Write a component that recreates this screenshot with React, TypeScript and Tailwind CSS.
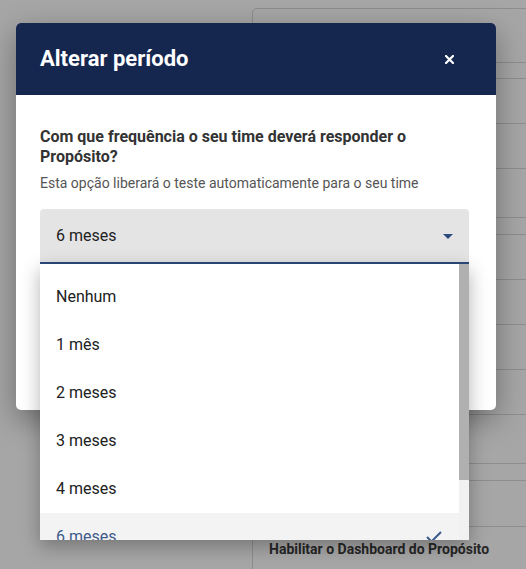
import React from "react";

const rows = [54, 16, 45, 45, 49, 17, 45, 45, 45, 45, 49, 17, 46];
const items = ["Nenhum", "1 mês", "2 meses", "3 meses", "4 meses"];

export default function App() {
  return (
    <div
      className="relative w-[526px] h-[569px] overflow-hidden bg-[#a6a6a6]"
      style={{ fontFamily: "Roboto, 'Noto Sans', sans-serif" }}
    >
      {/* background page */}
      <div className="pl-[252px] pt-[8px]">
        <div className="border-l border-t border-[#8d8d8d] rounded-tl-[5px] h-[600px]">
          {rows.map((h, i) => (
            <div key={i} className="border-b border-[#8d8d8d] box-border" style={{ height: h }} />
          ))}
          <div className="pl-[16px] pt-[12px] text-[14px] font-bold text-[#262626] leading-[20px]">
            Habilitar o Dashboard do Propósito
          </div>
        </div>
      </div>

      {/* dialog */}
      <div className="absolute left-[16px] top-[23px] w-[480px] h-[387px] bg-white rounded-[5px] overflow-hidden shadow-[0_10px_30px_rgba(0,0,0,0.35)]">
        <div className="h-[72px] bg-[#15264f] flex items-center justify-between pl-[24px] pr-[42px]">
          <h2 className="text-white text-[22px] font-bold leading-[26px]">Alterar período</h2>
          <svg width="9" height="9" viewBox="0 0 9 9">
            <path d="M1 1 L8 8 M8 1 L1 8" stroke="white" strokeWidth="2.2" strokeLinecap="square" />
          </svg>
        </div>
        <div className="px-[24px] pt-[32px]">
          <p className="text-[16px] font-bold text-[#333333] leading-[20px]">
            Com que frequência o seu time deverá responder o Propósito?
          </p>
          <p className="mt-[6px] text-[14px] text-[#555555] leading-[20px]">
            Esta opção liberará o teste automaticamente para o seu time
          </p>
          <div className="mt-[16px] w-[429px] h-[55px] pt-[1px] bg-[#e4e4e4] rounded-t-[4px] border-b-2 border-[#2c4a7e] flex items-center justify-between pl-[16px] pr-[16px] box-border">
            <span className="text-[16px] text-[#222222]">6 meses</span>
            <svg width="10" height="5" viewBox="0 0 10 5">
              <path d="M0 0 L10 0 L5 5 Z" fill="#2c4a7e" />
            </svg>
          </div>
        </div>
      </div>

      {/* dropdown menu */}
      <div className="absolute left-[40px] top-[264px] w-[429px] h-[276px] bg-white overflow-hidden shadow-[0_6px_18px_rgba(0,0,0,0.3)] flex">
        <div className="flex-1 pt-[9px]">
          {items.map((t) => (
            <div key={t} className="h-[48px] flex items-center pl-[16px] text-[16px] text-[#212121]">
              {t}
            </div>
          ))}
          <div className="h-[48px] flex items-center justify-between pl-[16px] pr-[16px] bg-[#f3f3f3] text-[16px] text-[#3f5b8c]">
            <span>6 meses</span>
            <svg width="18" height="14" viewBox="0 0 18 14">
              <path d="M2 7 L6.5 11.5 L16 2" stroke="#3b5a8c" strokeWidth="2" fill="none" />
            </svg>
          </div>
        </div>
        <div className="w-[10px] bg-[#f1f1f1] flex flex-col">
          <div className="h-[216px] bg-[#b0b0b0]" />
        </div>
      </div>
    </div>
  );
}
